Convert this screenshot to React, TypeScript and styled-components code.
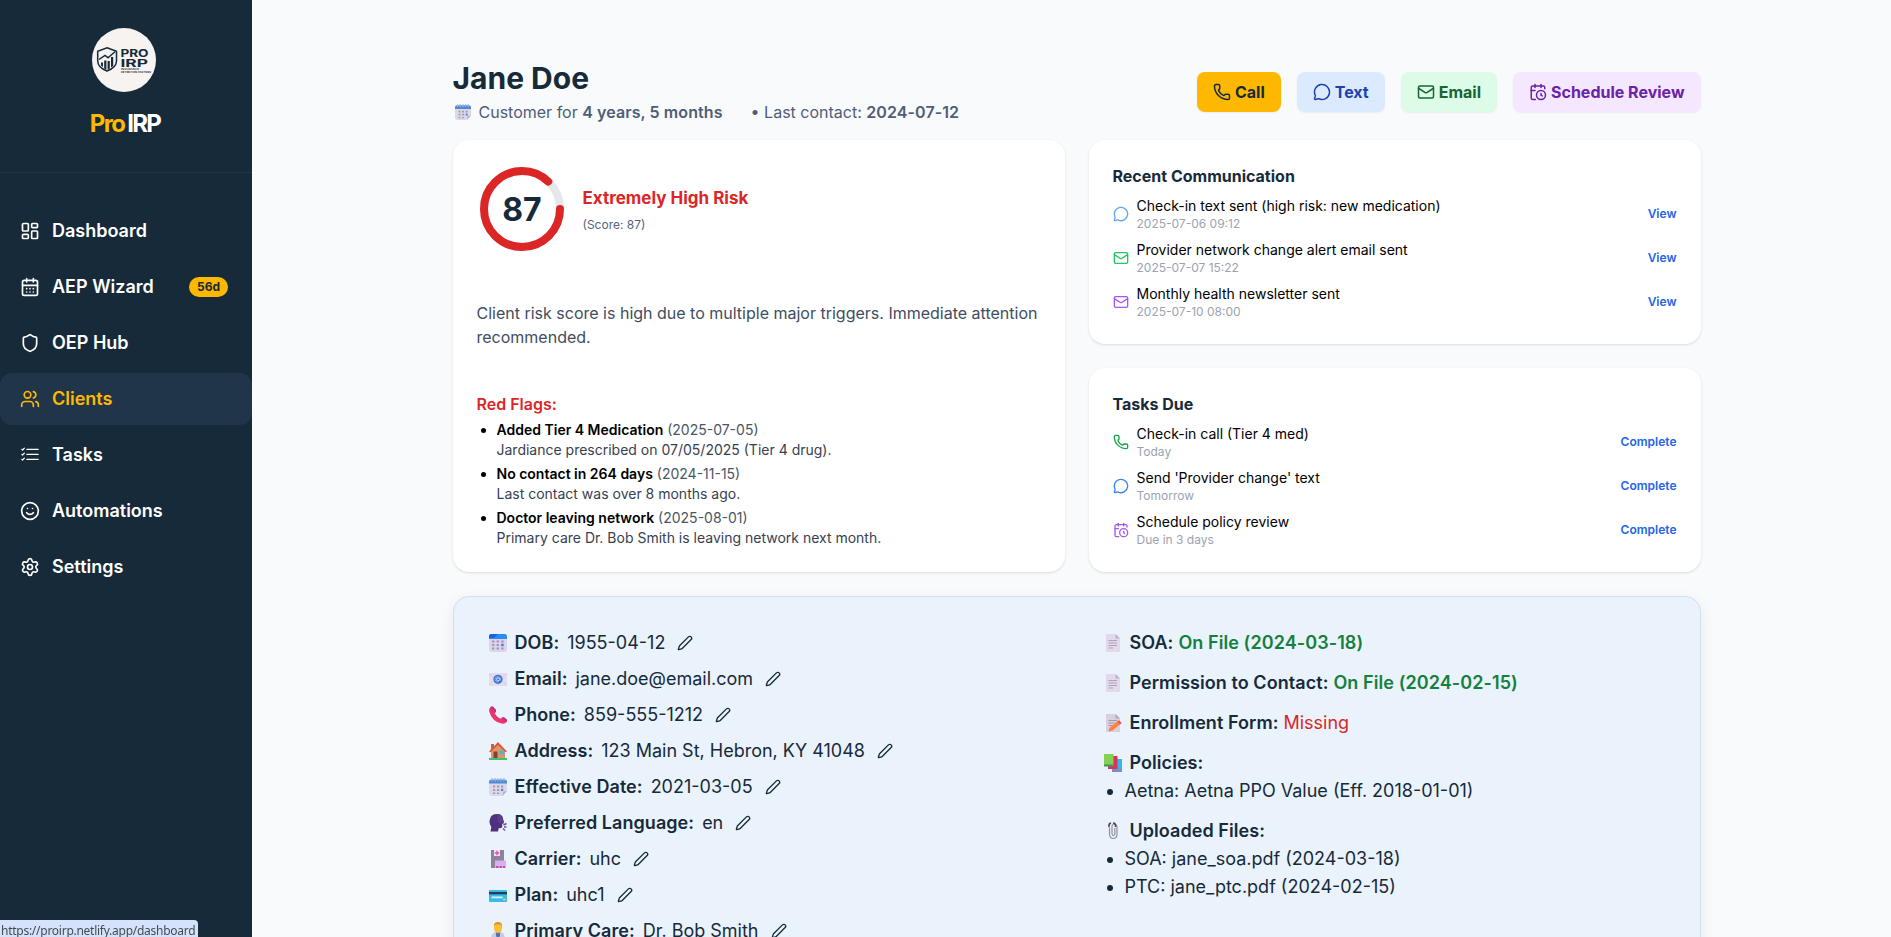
import React from "react";
import styled, { createGlobalStyle } from "styled-components";
import {
  LayoutDashboard,
  CalendarDays,
  Shield,
  Users,
  Smile,
  Settings,
  Phone,
  MessageCircle,
  Mail,
  CalendarClock,
  Pen,
} from "lucide-react";
import { BsListCheck } from "react-icons/bs";

const GlobalStyle = createGlobalStyle`
  * { box-sizing: border-box; }
  body {
    margin: 0;
    background: #f9fafc;
    color: #000;
    font-family: Inter, "Liberation Sans", sans-serif;
    font-size: 16px;
    line-height: 24px;
    overflow: hidden;
  }
  h1, h2, h3, p, ul { margin: 0; padding: 0; }
  button { font: inherit; border: 0; background: none; padding: 0; cursor: pointer; }
  svg { flex-shrink: 0; display: block; }
`;

const Shell = styled.div`
  display: flex;
  height: 937px;
  overflow: hidden;
`;

const Sidebar = styled.aside`
  width: 252px;
  flex-shrink: 0;
  background: #172a3a;
  color: #fff;
`;

const Brand = styled.div`
  height: 173px;
  padding: 28px 4px 0 0;
  display: flex;
  flex-direction: column;
  align-items: center;
  border-bottom: 1px solid #213547;
`;

const BrandName = styled.div`
  margin: 16px 0 0 2px;
  font-size: 24px;
  line-height: 32px;
  font-weight: 700;
  letter-spacing: -1.7px;
  white-space: nowrap;
  span { color: #ffb800; margin-right: -1px; }
`;

const Nav = styled.nav`
  padding-top: 32px;
  display: flex;
  flex-direction: column;
  gap: 4px;
`;

const NavItem = styled.a<{ $active?: boolean }>`
  height: 52px;
  padding: 0 24px 0 20px;
  display: flex;
  align-items: center;
  gap: 12px;
  border-radius: 12px;
  font-size: 18px;
  line-height: 28px;
  font-weight: 600;
  color: ${(p) => (p.$active ? "#ffb800" : "#fff")};
  background: ${(p) => (p.$active ? "#20344a" : "transparent")};
`;

const Badge = styled.span`
  margin-left: auto;
  padding: 2px 8px;
  border-radius: 10px;
  background: #ffb800;
  color: #172a3a;
  font-size: 12px;
  line-height: 16px;
  font-weight: 700;
`;

const Main = styled.main`
  flex: 1;
  padding: 60px 190.5px 0 200.5px;
`;

const Header = styled.header`
  display: flex;
  justify-content: space-between;
  align-items: center;
  margin-bottom: 16px;
`;

const Name = styled.h1`
  font-size: 30px;
  line-height: 36px;
  font-weight: 700;
  color: #172a3a;
`;

const Meta = styled.p`
  margin-top: 4px;
  display: flex;
  align-items: center;
  white-space: pre;
  color: #4f5d78;
  b { font-weight: 600; letter-spacing: 0.09px; }
  svg { margin: 0 8px 0 2px; }
`;

const LastContact = styled.span`
  margin-left: 28px;
`;

const Actions = styled.div`
  display: flex;
  gap: 16px;
`;

const Action = styled.button<{ $bg: string; $fg: string }>`
  height: 40px;
  padding: 8px 16px;
  display: flex;
  align-items: center;
  gap: 4px;
  border-radius: 8px;
  font-weight: 700;
  white-space: nowrap;
  background: ${(p) => p.$bg};
  color: ${(p) => p.$fg};
  box-shadow: 0 1px 2px rgba(0, 0, 0, 0.06);
`;

const Cards = styled.div`
  display: grid;
  grid-template-columns: 1fr 1fr;
  gap: 24px;
`;

const Stack = styled.div`
  display: flex;
  flex-direction: column;
  gap: 24px;
`;

const Card = styled.section`
  background: #fff;
  border-radius: 16px;
  padding: 24px;
  box-shadow: 0 1px 3px rgba(0, 0, 0, 0.1), 0 1px 2px -1px rgba(0, 0, 0, 0.1);
`;

const RiskRow = styled.div`
  display: flex;
  align-items: center;
  gap: 16px;
  height: 90px;
`;

const RiskTitle = styled.div`
  font-size: 17px;
  font-weight: 700;
  color: #dc2626;
  margin-bottom: 7px;
`;

const RiskScore = styled.div`
  font-size: 12px;
  line-height: 16px;
  color: #56617a;
`;

const Summary = styled.p`
  margin-top: 47px;
  color: #414d60;
`;

const FlagsTitle = styled.h3`
  margin: 43px 0 4px;
  font-size: 16px;
  line-height: 24px;
  font-weight: 600;
  color: #dc2626;
`;

const Flags = styled.ul`
  padding-left: 20px;
  font-size: 14px;
  line-height: 20px;
  li + li { margin-top: 4px; }
  b { font-weight: 600; }
  span { color: #4b5563; }
  div { color: #374151; }
`;

const CardTitle = styled.h2`
  margin-bottom: 8px;
  font-size: 16px;
  line-height: 24px;
  font-weight: 700;
  color: #172a3a;
`;

const Entries = styled.div`
  display: flex;
  flex-direction: column;
  gap: 8px;
`;

const Entry = styled.div`
  height: 36px;
  display: flex;
  align-items: center;
  gap: 8px;
`;

const EntryText = styled.div`
  flex: 1;
  font-size: 14px;
  line-height: 20px;
`;

const EntryDate = styled.div`
  font-size: 12px;
  line-height: 16px;
  color: #9ca3af;
`;

const LinkButton = styled.button`
  font-size: 12px;
  line-height: 16px;
  font-weight: 600;
  color: #2563eb;
`;

const Details = styled.section`
  margin-top: 24px;
  height: 420px;
  padding: 32px;
  display: grid;
  grid-template-columns: 1fr 1fr;
  gap: 48px;
  align-items: start;
  border: 1px solid #d0e0f0;
  border-radius: 16px;
  background: #eaf2fb;
  color: #172a3a;
  font-size: 18px;
  line-height: 28px;
  box-shadow: 0 4px 14px rgba(23, 42, 58, 0.08);
`;

const Column = styled.div<{ $gap: number }>`
  display: flex;
  flex-direction: column;
  gap: ${(p) => p.$gap}px;
`;

const Field = styled.div`
  display: flex;
  align-items: center;
  white-space: nowrap;
  b { font-weight: 600; letter-spacing: 0.06px; }
`;

const Glyph = styled.span`
  width: 29px;
  padding-left: 3px;
`;

const Value = styled.span`
  margin: 0 12px 0 8px;
`;

const FieldStatus = styled.span<{ $ok?: boolean }>`
  margin-left: 5px;
  font-weight: ${(p) => (p.$ok ? 600 : 400)};
  letter-spacing: ${(p) => (p.$ok ? "0.08px" : "0")};
  color: ${(p) => (p.$ok ? "#15803d" : "#dc2626")};
`;

const Bullets = styled.ul`
  padding-left: 24px;
`;

const StatusBubble = styled.div`
  position: fixed;
  left: 0;
  bottom: 0;
  width: 198px;
  height: 17px;
  padding: 2px 0 0 1px;
  border-top-right-radius: 4px;
  background: #d6e2fb;
  color: #454a52;
  font: 12px/17px "Noto Sans", "Open Sans", sans-serif;
  letter-spacing: -0.26px;
  white-space: nowrap;
`;

const LogoMark = () => (
  <svg width="64" height="64" viewBox="0 0 64 64">
    <circle cx="32" cy="32" r="32" fill="#f6f3f0" />
    <g fill="none" stroke="#172a3a" strokeWidth="1.5">
      <path d="M15 19.800 24.500 23.300V33c0 5-4 8-9.500 10-5.300-2-9.300-5-9.300-10V23.300Z" />
      <path d="M7 31.500l6-4 3 2.200 7-6" />
    </g>
    <path fill="#172a3a" d="M9 34.500h2v4.500l-2-1.500zM12.200 32.500h2.200v9l-2.200-1zM15.600 33h2.200v7.500l-2.200 1.200zM19 29h2.200v9L19 39.500z" />
    <g fill="#172a3a" fontFamily="Inter, sans-serif">
      <text x="28.400" y="28.800" fontSize="10.300" fontWeight="700" textLength="28" lengthAdjust="spacingAndGlyphs">PRO</text>
      <text x="28.400" y="38.700" fontSize="10.600" fontWeight="700" textLength="27.500" lengthAdjust="spacingAndGlyphs">IRP</text>
      <text x="29" y="42.300" fontSize="2.600" fontWeight="600" textLength="18" lengthAdjust="spacingAndGlyphs">INSURANCE</text>
      <text x="29" y="44.900" fontSize="2.600" fontWeight="600" textLength="30" lengthAdjust="spacingAndGlyphs">RETENTION PARTNER</text>
    </g>
  </svg>
);

const RiskRing = () => {
  const length = 2 * Math.PI * 38;
  return (
    <svg width="90" height="90" viewBox="0 0 90 90">
      <circle cx="45" cy="45" r="38" fill="none" stroke="#e5e7eb" strokeWidth="8" />
      <circle
        cx="45"
        cy="45"
        r="38"
        fill="none"
        stroke="#dc2626"
        strokeWidth="8"
        strokeLinecap="round"
        strokeDasharray={`${length * 0.87} ${length}`}
      />
      <text x="45" y="57" textAnchor="middle" fontSize="32" fontWeight="700" fill="#172a3a" fontFamily="Inter, sans-serif">
        87
      </text>
    </svg>
  );
};

type GlyphName =
  | "calendar" | "email" | "phone" | "house" | "spiral" | "speaking" | "office" | "card"
  | "doctor" | "page" | "memo" | "books" | "clips";

const drawings: Record<GlyphName, React.ReactNode> = {
  calendar: (
    <>
      <rect width="18" height="18" rx="3" fill="#ddd3ee" />
      <path d="M0 5V2.500Q0 0 2.500 0h13Q18 0 18 2.500V5z" fill="#2b8df0" />
      <path d="M0 4V2.500Q0 0 2.500 0H9L5 4z" fill="#1f62d8" />
      <path d="M3 6.500h2.400v2H3zM7.600 6.500H10v2H7.600zM12.200 6.500h2.400v2h-2.400zM3 10h2.400v2H3zM7.600 10H10v2H7.600zM3 13.500h2.400v2H3zM7.600 13.500H10v2H7.600zM12.200 13.500h2.400v2h-2.400z" fill="#a297b4" />
      <path d="M12.200 9.800h2.400v2.400h-2.400z" fill="#148bea" />
    </>
  ),
  spiral: (
    <>
      <path d="M0 4h18v9l-4.500 5H3q-3 0-3-3z" fill="#dcd7ea" />
      <path d="M0 5.500V4q0-2.500 2.500-2.500h13Q18 1.500 18 4v1.500z" fill="#4a8bd6" />
      <path d="M3 0v3.500M6 0v3.500M9 0v3.500M12 0v3.500M15 0v3.500" stroke="#aab8d4" strokeWidth="1.200" />
      <path d="M4 7.500h2.200v2H4zM8 7.500h2.200v2H8zM12 7.500h2.200v2H12zM4 11h2.200v2H4zM8 11h2.200v2H8zM4 14.500h2.200v1.500H4zM8 14.500h2.200v1.500H8z" fill="#a29bb2" />
      <path d="M12 10.800h2.200V13H12z" fill="#3a8ed8" />
      <path d="M13.500 18l.5-4.500 4-.5z" fill="#b9b1cc" />
    </>
  ),
  email: (
    <>
      <rect y="3" width="18" height="13" rx="1" fill="#e4dced" />
      <path d="M0 4l9 6 9-6M0 15l6-5M18 15l-6-5" stroke="#d3c9e0" fill="none" strokeWidth=".8" />
      <circle cx="9" cy="9.300" r="4.600" fill="#3972cf" />
      <circle cx="9" cy="9.300" r="1.500" fill="none" stroke="#d7e6ff" strokeWidth=".9" />
      <path d="M10.500 8v2q.4 1 1.300.2.500-3-2.800-3.700-3.300.4-3 3.200.8 2.900 3.800 2.200" fill="none" stroke="#a9c9fa" strokeWidth=".7" />
    </>
  ),
  phone: (
    <>
      <path d="M1.500 1Q3-.6 4.200.8l2.600 3q.8 1.400-.5 2.600-.8.700 0 1.800 2 3 4.600 4.200 1.100.300 1.700-.5 1-1.200 2.600-.3l2.300 1.700q1.200 1.100.1 2.700-1.500 2.200-5 1.600Q3 15.500.2 5.500-.3 2.500 1.500 1z" fill="#ec3568" />
      <path d="M3 .3l3.800 3.500q.8 1.400-.5 2.600L2 2zM12.600 11.900q1-1.200 2.600-.3l2.300 1.700q.9 1-.2 2.700z" fill="#b63789" />
    </>
  ),
  house: (
    <>
      <path d="M2 2h3v5H2z" fill="#b56a46" />
      <path d="M2 8l7-6 7 6v9H2z" fill="#e0965f" />
      <path d="M0 9.500L9 0l9 9.500-1.500.8L9 3l-7.500 7.300z" fill="#d9583a" />
      <path d="M4.500 9.500h4V17h-4z" fill="#7d4438" />
      <path d="M11 8.500h4v4h-4z" fill="#3fb4ee" />
      <path d="M0 16h18v2H0z" fill="#43bf72" />
    </>
  ),
  speaking: (
    <>
      <path d="M1 5Q2 0 8 0q5.500 0 6 5l1 4-1.800.8V13q-.5 1.500-3.500 1.200L9 17.500H1.500l.8-4.500Q-.5 9 1 5z" fill="#50317f" />
      <path d="M8 0q5.500 0 6 5l1 4-1.800.8L9 8z" fill="#5d3d8e" />
      <path d="M14.500 11l3-1.500M15 13h2.500M14 14.500l2 2" stroke="#66539a" strokeWidth="1.400" />
    </>
  ),
  office: (
    <>
      <path d="M2 0h13v18H2z" fill="#8d819b" />
      <path d="M5 0h6v6H5z" fill="#f3dff5" />
      <path d="M8 .8v4.400M5.800 3h4.400" stroke="#ed4b9e" strokeWidth="1.400" />
      <path d="M6 10.500h11V18H6z" fill="#d7b0ee" />
      <path d="M7 16h2.500v2H7zM10.500 16H13v2h-2.500zM14 16h2v2h-2z" fill="#c54cb3" />
    </>
  ),
  card: (
    <>
      <rect y="4" width="18" height="12" rx="1" fill="#38b9e8" />
      <path d="M0 6h18v2.300H0z" fill="#233e58" />
      <path d="M2.500 10.500h11v1.800h-11z" fill="#d4f2fa" />
      <path d="M14 12.500h2.500v2H14z" fill="#f4c63a" />
    </>
  ),
  doctor: (
    <>
      <path d="M2 18q0-7 4.500-8h5Q16 11 16 18z" fill="#c6cbe2" />
      <path d="M7 9h4v5l-2 3-2-3z" fill="#4f75b8" />
      <path d="M5 3q0-3 4-3t4 3v3.500Q12.500 11 9 11T5 6.500z" fill="#fac039" />
      <path d="M5 4V2.500Q6 0 9 0t4 2.500V4L11.500 2.500h-5z" fill="#e0912a" />
    </>
  ),
  page: (
    <>
      <path d="M2 0h9.500L16 4.500V18H2z" fill="#e3d9ec" />
      <path d="M11.500 0L16 4.500h-4.500z" fill="#bcb1c9" />
      <path d="M4.500 6.500h8.500M4.500 9h8.500M4.500 11.500h8.500M4.500 14h4.500" stroke="#a79cb6" strokeWidth=".9" />
    </>
  ),
  memo: (
    <>
      <path d="M2 0h9.500L16 4.500V18H2z" fill="#d9cfe1" />
      <path d="M11.500 0L16 4.500h-4.500z" fill="#b3a8bd" />
      <path d="M4.500 6.500h8.500M4.500 9h6M4.500 11.500h4" stroke="#a195ad" />
      <path d="M4.500 17.500l1-3.500L13 7.500l3 3-7.500 6z" fill="#fb8437" />
      <path d="M13 7.500l1.800-1.200 3 2.700L16 10.500z" fill="#e8505c" />
    </>
  ),
  books: (
    <>
      <path d="M8 5h10v13H8z" fill="#35b5ee" />
      <path d="M8 15h10v3H8z" fill="#7c8fc5" />
      <path d="M4 2h9.500v13H4z" fill="#df2f5f" />
      <path d="M0 0h9.500v12H0z" fill="#82d150" />
      <path d="M0 10.500h9.500v2H0z" fill="#379b58" />
    </>
  ),
  clips: (
    <>
      <path d="M5.500 5.500v7q.5 4 3.800 4t3.700-4V5q-.3-3-2.700-3T8 5v7q.3 1.600 1.400 1.600t1.400-1.600V6" fill="none" stroke="#958e9f" strokeWidth="1.200" />
      <path d="M5 5q-.6-3.500 2-4M9 1q3 0 2.500 4" fill="none" stroke="#4b424f" strokeWidth="1.500" />
    </>
  ),
};

const Emoji = ({ name, size = 18 }: { name: GlyphName; size?: number }) => (
  <svg width={size} height={size} viewBox="0 0 18 18">
    {drawings[name]}
  </svg>
);

const navItems = [
  { label: "Dashboard", icon: <LayoutDashboard size={20} /> },
  { label: "AEP Wizard", icon: <CalendarDays size={20} />, badge: "56d" },
  { label: "OEP Hub", icon: <Shield size={20} /> },
  { label: "Clients", icon: <Users size={20} />, active: true },
  { label: "Tasks", icon: <BsListCheck size={20} /> },
  { label: "Automations", icon: <Smile size={20} /> },
  { label: "Settings", icon: <Settings size={20} /> },
];

const flags = [
  ["Added Tier 4 Medication", "(2025-07-05)", "Jardiance prescribed on 07/05/2025 (Tier 4 drug)."],
  ["No contact in 264 days", "(2024-11-15)", "Last contact was over 8 months ago."],
  ["Doctor leaving network", "(2025-08-01)", "Primary care Dr. Bob Smith is leaving network next month."],
];

const communications = [
  { icon: <MessageCircle size={16} color="#60a5fa" />, text: "Check-in text sent (high risk: new medication)", date: "2025-07-06 09:12" },
  { icon: <Mail size={16} color="#22c55e" />, text: "Provider network change alert email sent", date: "2025-07-07 15:22" },
  { icon: <Mail size={16} color="#a855f7" />, text: "Monthly health newsletter sent", date: "2025-07-10 08:00" },
];

const tasks = [
  { icon: <Phone size={16} color="#16a34a" />, text: "Check-in call (Tier 4 med)", date: "Today" },
  { icon: <MessageCircle size={16} color="#3b82f6" />, text: "Send 'Provider change' text", date: "Tomorrow" },
  { icon: <CalendarClock size={16} color="#a855f7" />, text: "Schedule policy review", date: "Due in 3 days" },
];

const fields: [GlyphName, string, string][] = [
  ["calendar", "DOB:", "1955-04-12"],
  ["email", "Email:", "jane.doe@email.com"],
  ["phone", "Phone:", "859-555-1212"],
  ["house", "Address:", "123 Main St, Hebron, KY 41048"],
  ["spiral", "Effective Date:", "2021-03-05"],
  ["speaking", "Preferred Language:", "en"],
  ["office", "Carrier:", "uhc"],
  ["card", "Plan:", "uhc1"],
  ["doctor", "Primary Care:", "Dr. Bob Smith"],
];

const EntryList = ({ items, action }: { items: typeof tasks; action: string }) => (
  <Entries>
    {items.map((item) => (
      <Entry key={item.text}>
        {item.icon}
        <EntryText>
          {item.text}
          <EntryDate>{item.date}</EntryDate>
        </EntryText>
        <LinkButton>{action}</LinkButton>
      </Entry>
    ))}
  </Entries>
);

const Label = ({ glyph, text }: { glyph: GlyphName; text: string }) => (
  <>
    <Glyph>
      <Emoji name={glyph} />
    </Glyph>
    <b>{text}</b>
  </>
);

export default function App() {
  return (
    <Shell>
      <GlobalStyle />
      <Sidebar>
        <Brand>
          <LogoMark />
          <BrandName>
            <span>Pro</span> IRP
          </BrandName>
        </Brand>
        <Nav>
          {navItems.map((item) => (
            <NavItem key={item.label} $active={item.active}>
              {item.icon}
              {item.label}
              {item.badge && <Badge>{item.badge}</Badge>}
            </NavItem>
          ))}
        </Nav>
      </Sidebar>
      <Main>
        <Header>
          <div>
            <Name>Jane Doe</Name>
            <Meta>
              <Emoji name="spiral" size={16} />
              <span>Customer for <b>4 years, 5 months</b></span>
              <LastContact>• Last contact: <b>2024-07-12</b></LastContact>
            </Meta>
          </div>
          <Actions>
            <Action $bg="#ffb800" $fg="#172a3a"><Phone size={18} />Call</Action>
            <Action $bg="#dbeafe" $fg="#1e40af"><MessageCircle size={18} />Text</Action>
            <Action $bg="#dcfce7" $fg="#166534"><Mail size={18} />Email</Action>
            <Action $bg="#f3e8ff" $fg="#6b21a8"><CalendarClock size={18} />Schedule Review</Action>
          </Actions>
        </Header>
        <Cards>
          <Card>
            <RiskRow>
              <RiskRing />
              <div>
                <RiskTitle>Extremely High Risk</RiskTitle>
                <RiskScore>(Score: 87)</RiskScore>
              </div>
            </RiskRow>
            <Summary>
              Client risk score is high due to multiple major triggers. Immediate attention recommended.
            </Summary>
            <FlagsTitle>Red Flags:</FlagsTitle>
            <Flags>
              {flags.map(([title, date, note]) => (
                <li key={title}>
                  <b>{title}</b> <span>{date}</span>
                  <div>{note}</div>
                </li>
              ))}
            </Flags>
          </Card>
          <Stack>
            <Card>
              <CardTitle>Recent Communication</CardTitle>
              <EntryList items={communications} action="View" />
            </Card>
            <Card>
              <CardTitle>Tasks Due</CardTitle>
              <EntryList items={tasks} action="Complete" />
            </Card>
          </Stack>
        </Cards>
        <Details>
          <Column $gap={8}>
            {fields.map(([glyph, label, value]) => (
              <Field key={label}>
                <Label glyph={glyph} text={label} />
                <Value>{value}</Value>
                <Pen size={16} />
              </Field>
            ))}
          </Column>
          <Column $gap={12}>
            <Field>
              <Label glyph="page" text="SOA:" />
              <FieldStatus $ok>On File (2024-03-18)</FieldStatus>
            </Field>
            <Field>
              <Label glyph="page" text="Permission to Contact:" />
              <FieldStatus $ok>On File (2024-02-15)</FieldStatus>
            </Field>
            <Field>
              <Label glyph="memo" text="Enrollment Form:" />
              <FieldStatus>Missing</FieldStatus>
            </Field>
            <div>
              <Field><Label glyph="books" text="Policies:" /></Field>
              <Bullets>
                <li>Aetna: Aetna PPO Value (Eff. 2018-01-01)</li>
              </Bullets>
            </div>
            <div>
              <Field><Label glyph="clips" text="Uploaded Files:" /></Field>
              <Bullets>
                <li>SOA: jane_soa.pdf (2024-03-18)</li>
                <li>PTC: jane_ptc.pdf (2024-02-15)</li>
              </Bullets>
            </div>
          </Column>
        </Details>
      </Main>
      <StatusBubble>https://proirp.netlify.app/dashboard</StatusBubble>
    </Shell>
  );
}
